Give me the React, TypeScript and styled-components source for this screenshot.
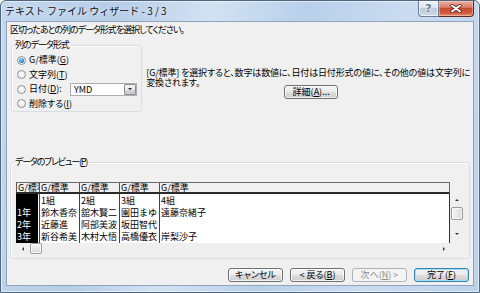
import React from "react";
import styled, { createGlobalStyle, css } from "styled-components";

const Global = createGlobalStyle`
  html, body { margin: 0; padding: 0; background: #ffffff; }
  body { font-family: "Noto Sans CJK JP", "Noto Sans", sans-serif; color: #000; }
  * { box-sizing: border-box; }
`;

const uiText = css`
  font-family: "Noto Sans CJK JP", "Noto Sans", sans-serif;
  font-feature-settings: "palt";
  font-size: 9px;
  white-space: nowrap;
`;

const Window = styled.div`
  width: 480px;
  height: 293px;
  border: 1px solid #50657e;
  border-radius: 6px 6px 0 0;
  background: linear-gradient(
    100deg,
    #c3d8ef 0%,
    #b6cde8 22%,
    #d2e2f3 40%,
    #b9d0ea 58%,
    #cbdcf0 78%,
    #bcd2eb 100%
  );
  box-shadow: inset 0 0 0 1px rgba(255, 255, 255, 0.55);
  display: flex;
  flex-direction: column;
  overflow: hidden;
`;

const TitleBar = styled.div`
  height: 20px;
  display: flex;
  align-items: flex-start;
  justify-content: space-between;
  padding: 0 5px 0 4px;
`;

const Title = styled.div`
  font-family: "Noto Sans CJK JP", sans-serif;
  font-size: 10px;
  line-height: 20px;
  color: #111;
  text-shadow: 0 0 4px rgba(255, 255, 255, 0.9);
  white-space: pre;
`;

const Caption = styled.div`
  display: flex;
`;

const CapBtn = styled.div<{ $kind: "help" | "close" }>`
  height: 16px;
  display: flex;
  align-items: center;
  justify-content: center;
  ${(p) =>
    p.$kind === "help"
      ? css`
          width: 21px;
          border: 1px solid #6a7d93;
          border-top: none;
          border-radius: 0 0 0 4px;
          background: linear-gradient(#eef3f8 0%, #dbe4ee 45%, #bccbdb 50%, #cfdbe7 100%);
          box-shadow: inset 0 0 0 1px rgba(255, 255, 255, 0.6);
        `
      : css`
          width: 35px;
          border: 1px solid #5f2b20;
          border-top: none;
          border-left: none;
          border-radius: 0 0 4px 0;
          background: linear-gradient(#eab0a2 0%, #dc7f67 42%, #c84a2e 50%, #cf5a3e 80%, #e79473 100%);
          box-shadow: inset 0 0 0 1px rgba(255, 220, 210, 0.45);
        `}
`;

const HelpGlyph = styled.span`
  font-family: "DejaVu Sans", sans-serif;
  font-size: 11px;
  font-weight: bold;
  line-height: 1;
  color: #66788c;
  text-shadow: 0 0 2px #fff, 0 0 1px #fff;
`;

const Client = styled.div`
  margin: 0 5px;
  height: 265px;
  border: 1px solid #8fa5bf;
  background: #f0f0f0;
  padding: 1px 3px 0 3px;
  display: flex;
  flex-direction: column;
`;

const Instruction = styled.div`
  ${uiText};
  letter-spacing: -1px;
  line-height: 14px;
  height: 14px;
`;

const TopRow = styled.div`
  margin-top: 2px;
  display: flex;
  align-items: flex-start;
`;

const Group = styled.fieldset<{ $width?: number }>`
  margin: 0;
  min-width: 0;
  border: 1px solid #d5dfe5;
  border-radius: 3px;
  box-shadow: inset 1px 1px 0 #fff;
  ${(p) => (p.$width ? `width: ${p.$width}px;` : "")}
`;

const FormatGroup = styled(Group)`
  margin-left: 1px;
  padding: 2px 2px 0 2px;
`;

const Legend = styled.legend<{ $shift?: number; $tracking?: number }>`
  ${uiText};
  letter-spacing: ${(p) => p.$tracking ?? 0}px;
  line-height: 12px;
  height: 12px;
  padding: 0 1px;
  margin-left: ${(p) => p.$shift ?? 0}px;
`;

const RadioRow = styled.div`
  height: 14.5px;
  display: flex;
  align-items: center;
  padding-left: 3px;
`;

const RadioCircle = styled.span<{ $checked?: boolean }>`
  width: 9px;
  height: 9px;
  border-radius: 50%;
  border: 1px solid #8a8f96;
  background: radial-gradient(circle at 50% 40%, #ffffff 0%, #f0f0f0 45%, #d6d9dd 100%);
  box-shadow: inset 0 0 0 1px #f4f4f4;
  display: flex;
  align-items: center;
  justify-content: center;
  flex: none;
  &::after {
    content: "";
    display: ${(p) => (p.$checked ? "block" : "none")};
    width: 5px;
    height: 5px;
    border-radius: 50%;
    background: radial-gradient(circle at 40% 35%, #8fd3ff 0%, #2f8ee0 55%, #1461b4 100%);
  }
`;

const RadioLabel = styled.span<{ $width?: number }>`
  ${uiText};
  margin-left: 3px;
  line-height: 12px;
  ${(p) => (p.$width ? `width: ${p.$width}px;` : "")}
`;

const Mn = styled.span`
  text-decoration: underline;
  text-underline-offset: 1px;
`;

const Select = styled.div`
  width: 67px;
  height: 13px;
  border: 1px solid #a9afb8;
  background: #fff;
  display: flex;
  align-items: center;
  justify-content: space-between;
  padding: 0 0 0 3px;
`;

const SelectText = styled.span`
  ${uiText};
  line-height: 11px;
`;

const DropBtn = styled.span`
  width: 12px;
  height: 11px;
  border: 1px solid #8d8d8d;
  border-radius: 1px;
  background: linear-gradient(#f5f5f5 0%, #e6e6e6 50%, #d6d6d6 51%, #cbcbcb 100%);
  display: flex;
  align-items: center;
  justify-content: center;
`;

const Tri = styled.span<{ $dir: "down" | "up" | "left" | "right"; $size?: number; $color?: string }>`
  width: 0;
  height: 0;
  ${(p) => {
    const s = p.$size ?? 2.5;
    const c = p.$color ?? "#222";
    switch (p.$dir) {
      case "down":
        return `border-left:${s}px solid transparent;border-right:${s}px solid transparent;border-top:${s}px solid ${c};`;
      case "up":
        return `border-left:${s}px solid transparent;border-right:${s}px solid transparent;border-bottom:${s}px solid ${c};`;
      case "left":
        return `border-top:${s}px solid transparent;border-bottom:${s}px solid transparent;border-right:${s}px solid ${c};`;
      default:
        return `border-top:${s}px solid transparent;border-bottom:${s}px solid transparent;border-left:${s}px solid ${c};`;
    }
  }}
`;

const Desc = styled.div`
  margin-left: 4px;
  flex: 1;
  padding-top: 29px;
  display: flex;
  flex-direction: column;
  align-items: flex-start;
`;

const DescLine = styled.div`
  ${uiText};
  letter-spacing: -0.15px;
  line-height: 10px;
  width: fit-content;
`;

const Button = styled.div<{ $variant?: "normal" | "disabled" | "default"; $width?: number }>`
  ${uiText};
  width: ${(p) => p.$width ?? 55}px;
  height: 14px;
  line-height: 12px;
  text-align: center;
  border-radius: 3px;
  border: 1px solid #707070;
  background: linear-gradient(#f3f3f3 0%, #ebebeb 48%, #dddddd 52%, #cfcfcf 100%);
  box-shadow: inset 0 0 0 1px rgba(255, 255, 255, 0.75);
  color: #000;
  ${(p) =>
    p.$variant === "disabled" &&
    css`
      border-color: #adb2b5;
      background: #f4f4f4;
      box-shadow: none;
      color: #8a8a8a;
    `}
  ${(p) =>
    p.$variant === "default" &&
    css`
      border-color: #3c7fb1;
      box-shadow: inset 0 0 0 1px #9fe0fa;
    `}
`;

const DetailButton = styled(Button)`
  align-self: center;
  margin-top: -3px;
  margin-left: 6px;
`;

const PreviewGroup = styled(Group)`
  margin-top: 44px;
  padding: 0 3px 4px 5px;
`;

const PreviewGrid = styled.div`
  margin-top: 14px;
  display: grid;
  grid-template-columns: 434px 13px;
  grid-template-rows: 12px 49px 11px;
`;

const HeaderRow = styled.div`
  display: flex;
  background: #f0f0f0;
  border-top: 1px solid #6a6a6a;
  border-bottom: 2px solid #2a2a2a;
  border-right: 1px solid #6a6a6a;
`;

const cellText = css`
  font-family: "Noto Sans CJK JP", sans-serif;
  font-size: 9px;
  white-space: nowrap;
`;

const HeaderCell = styled.div<{ $width?: number; $clip?: boolean }>`
  ${cellText};
  ${(p) => (p.$width ? `width: ${p.$width}px; flex: none;` : "flex: 1;")}
  ${(p) => (p.$clip ? "overflow: hidden;" : "")}
  border-left: 1px solid #555;
  line-height: 9px;
  padding-left: 1px;
`;

const DataArea = styled.div`
  display: flex;
  background: #fff;
  border-right: 1px solid #333;
`;

const DataColumn = styled.div<{ $width?: number; $selected?: boolean }>`
  ${(p) => (p.$width ? `width: ${p.$width}px; flex: none;` : "flex: 1;")}
  padding-top: 1px;
  ${(p) =>
    p.$selected
      ? css`
          background: #000;
          color: #fff;
          box-shadow: inset -1px 0 0 #fff;
        `
      : css`
          border-left: 1px solid #444;
        `}
`;

const DataCell = styled.div`
  ${cellText};
  height: 12px;
  line-height: 12px;
  padding-left: 1px;
`;

const HScroll = styled.div`
  display: flex;
  align-items: stretch;
  background: #efefef;
`;

const VScroll = styled.div`
  height: 46px;
  display: flex;
  flex-direction: column;
  align-items: stretch;
  background: #efefef;
  padding-left: 1px;
`;

const ArrowBox = styled.div<{ $len: number; $vertical?: boolean }>`
  ${(p) => (p.$vertical ? `height: ${p.$len}px;` : `width: ${p.$len}px;`)}
  flex: none;
  display: flex;
  align-items: center;
  justify-content: center;
`;

const Thumb = styled.div<{ $vertical?: boolean }>`
  flex: none;
  ${(p) => (p.$vertical ? "height: 13px; margin: 1px 0 0 0;" : "width: 12px; margin-left: 1px;")}
  border: 1px solid #9b9b9b;
  border-radius: 2px;
  background: ${(p) =>
    p.$vertical
      ? "linear-gradient(90deg, #f6f6f6 0%, #e8e8e8 50%, #d9d9d9 100%)"
      : "linear-gradient(#f6f6f6 0%, #e8e8e8 50%, #d9d9d9 100%)"};
  box-shadow: inset 0 0 0 1px rgba(255, 255, 255, 0.7);
`;

const Spacer = styled.div`
  flex: 1;
`;

const ButtonRow = styled.div`
  margin-top: 9px;
  display: flex;
  justify-content: flex-end;
  gap: 7px;
  padding-right: 1px;
`;

const CloseIcon = () => (
  <svg width="12" height="9" viewBox="0 0 12 9">
    <path d="M2 1.5 L10 7.5 M10 1.5 L2 7.5" stroke="#5a2419" strokeWidth="3.6" strokeLinecap="round" />
    <path d="M2 1.5 L10 7.5 M10 1.5 L2 7.5" stroke="#ffffff" strokeWidth="2" strokeLinecap="round" />
  </svg>
);

const headers = ["G/標準", "G/標準", "G/標準", "G/標準", "G/標準"];
const widths: (number | undefined)[] = [23, 40, 40, 40, undefined];
const columns: string[][] = [
  ["", "1年", "2年", "3年"],
  ["1組", "鈴木香奈", "近藤進", "新谷希美"],
  ["2組", "舘木賢二", "阿部美波", "木村大悟"],
  ["3組", "園田まゆ", "坂田智代", "高橋優衣"],
  ["4組", "遠藤奈緒子", "", "岸梨沙子"],
];

export default function App() {
  return (
    <>
      <Global />
      <Window>
        <TitleBar>
          <Title>テキスト ファイル ウィザード - 3 / 3</Title>
          <Caption>
            <CapBtn $kind="help">
              <HelpGlyph>?</HelpGlyph>
            </CapBtn>
            <CapBtn $kind="close">
              <CloseIcon />
            </CapBtn>
          </Caption>
        </TitleBar>
        <Client>
          <Instruction>区切ったあとの列のデータ形式を選択してください。</Instruction>
          <TopRow>
            <FormatGroup $width={133}>
              <Legend $tracking={-1}>列のデータ形式</Legend>
              <RadioRow>
                <RadioCircle $checked />
                <RadioLabel>
                  G/標準(<Mn>G</Mn>)
                </RadioLabel>
              </RadioRow>
              <RadioRow>
                <RadioCircle />
                <RadioLabel>
                  文字列(<Mn>T</Mn>)
                </RadioLabel>
              </RadioRow>
              <RadioRow>
                <RadioCircle />
                <RadioLabel $width={41}>
                  日付(<Mn>D</Mn>):
                </RadioLabel>
                <Select>
                  <SelectText>YMD</SelectText>
                  <DropBtn>
                    <Tri $dir="down" $size={2.5} />
                  </DropBtn>
                </Select>
              </RadioRow>
              <RadioRow>
                <RadioCircle />
                <RadioLabel>
                  削除する(<Mn>I</Mn>)
                </RadioLabel>
              </RadioRow>
            </FormatGroup>
            <Desc>
              <DescLine>[G/標準] を選択すると、数字は数値に、日付は日付形式の値に、その他の値は文字列に</DescLine>
              <DescLine>変換されます。</DescLine>
              <DetailButton $width={54}>
                詳細(<Mn>A</Mn>)...
              </DetailButton>
            </Desc>
          </TopRow>
          <PreviewGroup>
            <Legend $shift={-2} $tracking={-1.2}>
              データのプレビュー(<Mn>P</Mn>)
            </Legend>
            <PreviewGrid>
              <HeaderRow>
                {headers.map((h, i) => (
                  <HeaderCell key={i} $width={widths[i]} $clip={i === 0}>
                    {h}
                  </HeaderCell>
                ))}
              </HeaderRow>
              <div />
              <DataArea>
                {columns.map((col, i) => (
                  <DataColumn key={i} $width={widths[i]} $selected={i === 0}>
                    {col.map((c, j) => (
                      <DataCell key={j}>{c}</DataCell>
                    ))}
                  </DataColumn>
                ))}
              </DataArea>
              <VScroll>
                <ArrowBox $len={12} $vertical>
                  <Tri $dir="up" $size={2} $color="#3a3a3a" />
                </ArrowBox>
                <Thumb $vertical />
                <Spacer />
                <ArrowBox $len={12} $vertical>
                  <Tri $dir="down" $size={2} $color="#3a3a3a" />
                </ArrowBox>
              </VScroll>
              <HScroll>
                <ArrowBox $len={13}>
                  <Tri $dir="left" $size={2} $color="#3a3a3a" />
                </ArrowBox>
                <Thumb />
                <Spacer />
                <ArrowBox $len={13}>
                  <Tri $dir="right" $size={2} $color="#3a3a3a" />
                </ArrowBox>
              </HScroll>
            </PreviewGrid>
          </PreviewGroup>
          <ButtonRow>
            <Button>キャンセル</Button>
            <Button>
              &lt; 戻る(<Mn>B</Mn>)
            </Button>
            <Button $variant="disabled">
              次へ(<Mn>N</Mn>) &gt;
            </Button>
            <Button $variant="default">
              完了(<Mn>F</Mn>)
            </Button>
          </ButtonRow>
        </Client>
      </Window>
    </>
  );
}
